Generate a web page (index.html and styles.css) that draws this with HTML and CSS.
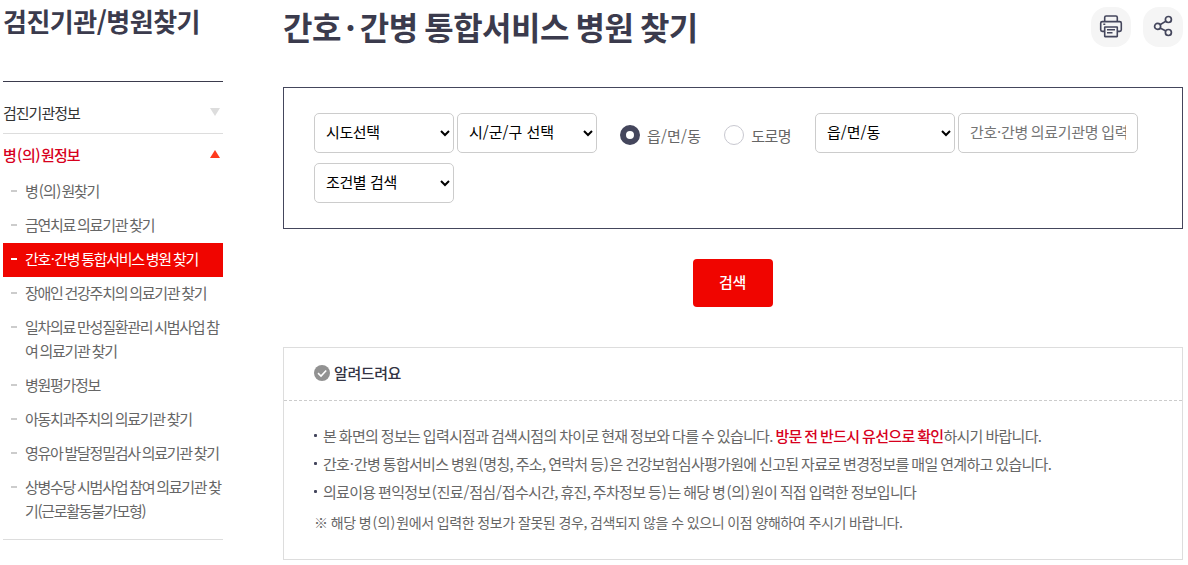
FILE: index.html
```html
<!DOCTYPE html>
<html lang="ko">
<head>
<meta charset="utf-8">
<title>간호·간병 통합서비스 병원 찾기</title>
<link rel="stylesheet" href="styles.css">
</head>
<body>
<div class="page">
  <aside class="sidebar">
    <h2 class="side-title">검진기관/병원찾기</h2>
    <nav class="side-nav">
      <a class="group group-closed">검진기관정보<span class="arrow arrow-down"></span></a>
      <a class="group group-open"><span>병<i class="po">(</i>의<i class="pc">)</i>원정보</span><span class="arrow arrow-up"></span></a>
      <ul class="sub">
        <li><span>병<i class="po">(</i>의<i class="pc">)</i>원찾기</span></li>
        <li>금연치료 의료기관 찾기</li>
        <li class="active"><span>간호<i class="mid">·</i>간병 통합서비스 병원 찾기</span></li>
        <li>장애인 건강주치의 의료기관 찾기</li>
        <li>일차의료 만성질환관리 시범사업 참여 의료기관 찾기</li>
        <li>병원평가정보</li>
        <li>아동치과주치의 의료기관 찾기</li>
        <li>영유아 발달정밀검사 의료기관 찾기</li>
        <li>상병수당 시범사업 참여 의료기관 찾기(근로활동불가모형)</li>
      </ul>
    </nav>
  </aside>
  <main class="content">
    <header class="head">
      <h1 class="title">간호<i class="mid">·</i>간병 통합서비스 병원 찾기</h1>
      <div class="tools">
        <button class="tool" aria-label="인쇄">
          <svg width="24" height="24" viewBox="0 0 24 24" fill="none" stroke="#44465c" stroke-width="1.6" stroke-linejoin="round"><path d="M5.700 6.600V2.400Q5.700 1 7.100 1H16.900Q18.300 1 18.300 2.400V6.600"/><path d="M5.700 16.400H3.300Q1.700 16.400 1.700 14.800V8.200Q1.700 6.600 3.300 6.600H20.700Q22.300 6.600 22.300 8.200V14.800Q22.300 16.400 20.700 16.400H18.300"/><rect x="5.700" y="12" width="12.600" height="9.600" rx=".3"/><path d="M4.300 9.200H6.300M8 14.800H16M8 17.800H13.500"/></svg>
        </button>
        <button class="tool" aria-label="공유">
          <svg width="24" height="24" viewBox="0 0 24 24" fill="none" stroke="#44465c" stroke-width="1.7"><circle cx="6.600" cy="11.400" r="3"/><circle cx="17.400" cy="4.500" r="3"/><circle cx="17.400" cy="17.500" r="3"/><path d="M9.100 9.800L14.900 6.100M9.100 13L14.900 16"/></svg>
        </button>
      </div>
    </header>
    <form class="search">
      <div class="row">
        <select class="field"><option>시도선택</option></select>
        <select class="field field-slash"><option>시/군/구 선택</option></select>
        <div class="radios">
          <label class="radio radio-slash"><span class="dot dot-on"></span>읍/면/동</label>
          <label class="radio"><span class="dot"></span>도로명</label>
        </div>
        <select class="field field-slash"><option>읍/면/동</option></select>
        <input class="field field-text" placeholder="간호·간병 의료기관명 입력">
      </div>
      <div class="row">
        <select class="field"><option>조건별 검색</option></select>
      </div>
    </form>
    <button class="submit">검색</button>
    <section class="notice">
      <h3 class="notice-title">
        <svg width="16" height="16" viewBox="0 0 16 16"><circle cx="8" cy="8" r="8" fill="#929292"/><path d="M4 8.200L7 11L12.200 5.500" fill="none" stroke="#fff" stroke-width="1.600"/></svg>
        알려드려요
      </h3>
      <div class="notice-body">
        <ul class="notes">
          <li><span>본 화면의 정보는 입력시점과 검색시점의 차이로 현재 정보와 다를 수 있습니다. <em>방문 전 반드시 유선으로 확인</em>하시기 바랍니다.</span></li>
          <li><span>간호<i class="mid">·</i>간병 통합서비스 병원<i class="po">(</i>명칭, 주소, 연락처 등<i class="pc">)</i>은 건강보험심사평가원에 신고된 자료로 변경정보를 매일 연계하고 있습니다.</span></li>
          <li><span>의료이용 편익정보<i class="po">(</i>진료<i class="sl">/</i>점심<i class="sl">/</i>접수시간, 휴진, 주차정보 등<i class="pc">)</i>는 해당 병<i class="po">(</i>의<i class="pc">)</i>원이 직접 입력한 정보입니다</span></li>
        </ul>
        <p class="remark">※ 해당 병<i class="po">(</i>의<i class="pc">)</i>원에서 입력한 정보가 잘못된 경우, 검색되지 않을 수 있으니 이점 양해하여 주시기 바랍니다.</p>
      </div>
    </section>
  </main>
</div>
</body>
</html>
```
FILE: styles.css
```css
* { box-sizing: border-box; margin: 0; padding: 0; }
body { width: 1188px; height: 565px; overflow: hidden; background: #fff; color: #666; font-family: "Noto Sans CJK KR", sans-serif; font-size: 15px; }
ul { list-style: none; }
i { font-style: normal; }
button { border: 0; font-family: inherit; }
.po { margin: 0 0.6px 0 1.2px; }
.pc { margin: 0 1.4px 0 0.6px; }
.sl { margin: 0 0.6px; }
.mid { margin: 0 0.04em; }
.page { display: flex; gap: 60px; padding-left: 3px; }
.sidebar { width: 220px; flex: none; }
.side-title { height: 81px; padding-top: 2px; font-size: 26px; line-height: 38px; letter-spacing: -0.5px; color: #3b3b4d; font-weight: 700; white-space: nowrap; }
.side-nav { border-top: 1px solid #3b3b4d; border-bottom: 1px solid #ddd; height: 459px; }
.group { display: flex; justify-content: space-between; align-items: center; padding-right: 3px; font-size: 15px; letter-spacing: -1px; color: #333; }
.group-closed { height: 52px; padding-top: 9px; border-bottom: 1px solid #ddd; }
.group-open { height: 41px; padding-bottom: 1px; color: #d7001d; font-weight: 500; }
.arrow { border-left: 5px solid transparent; border-right: 5px solid transparent; }
.arrow-down { border-top: 8px solid #ddd; }
.arrow-up { border-bottom: 8px solid #ff3a1d; }
.sub li { display: flex; padding: 4px 0 6px 22px; line-height: 24px; letter-spacing: -1.28px; word-spacing: -0.9px; word-break: break-all; }
.sub li::before { content: ""; flex: none; width: 6px; height: 2px; margin: 11px 8px 0 -14px; background: #ccc; }
.sub .active { background: #f00500; color: #fff; }
.sub .active::before { background: #fff; }
.content { width: 900px; flex: none; }
.head { display: flex; justify-content: space-between; height: 87px; }
.title { padding-top: 2px; font-size: 32px; line-height: 48px; color: #3b3b4d; font-weight: 700; letter-spacing: -0.5px; word-spacing: -1.9px; white-space: nowrap; }
.title .mid { margin: 0 0.14em; }
.tools { display: flex; gap: 12px; padding-top: 7px; }
.tool { display: flex; align-items: center; justify-content: center; width: 40px; height: 40px; border-radius: 16px; background: #f5f5f5; }
.search { display: flex; flex-direction: column; gap: 10px; height: 142px; padding: 25px 30px; border: 1px solid #44465c; }
.row { display: flex; gap: 3px; }
.field { width: 140px; height: 40px; padding: 0 0 3px 7px; border: 1px solid #ccc; border-radius: 5px; background: #fff; color: #000; font-family: inherit; font-size: 15px; letter-spacing: -0.4px; }
.field-slash { letter-spacing: 0; }
.field-text { width: 180px; padding: 0 11px 3px; letter-spacing: -0.3px; word-spacing: -1px; }
.field-text::placeholder { color: #757575; }
.radios { display: flex; gap: 23px; width: 212px; height: 45px; margin-bottom: -5px; padding-left: 20px; }
.radio { display: flex; align-items: center; gap: 7px; letter-spacing: -0.5px; white-space: nowrap; }
.radio-slash { letter-spacing: 0.2px; }
.dot { width: 20px; height: 20px; margin-bottom: 1px; border: 1px solid #c8c8d0; border-radius: 50%; }
.dot-on { border: 6px solid #44465c; }
.submit { display: block; width: 80px; height: 48px; margin: 30px auto 40px; padding: 0 1px 4px 0; border-radius: 4px; background: #f00500; color: #fff; font-size: 15px; font-weight: 500; letter-spacing: -0.4px; }
.notice { height: 213px; border: 1px solid #ddd; }
.notice-title { display: flex; align-items: center; gap: 4px; height: 53px; padding: 0 30px 3px; border-bottom: 1px dashed #ccc; font-size: 15px; font-weight: 500; letter-spacing: -0.4px; color: #333344; }
.notice-body { padding: 21px 30px 0; line-height: 28px; white-space: nowrap; }
.notes li { display: flex; letter-spacing: -0.7px; word-spacing: -0.8px; }
.notes li::before { content: ""; width: 3px; height: 3px; margin: 12px 6px 0 0; border-radius: 1px; background: #44465c; }
.notes em { font-style: normal; font-weight: 500; color: #d7001d; }
.remark { padding-top: 2px; font-size: 14px; letter-spacing: -0.4px; word-spacing: -0.4px; }
```
